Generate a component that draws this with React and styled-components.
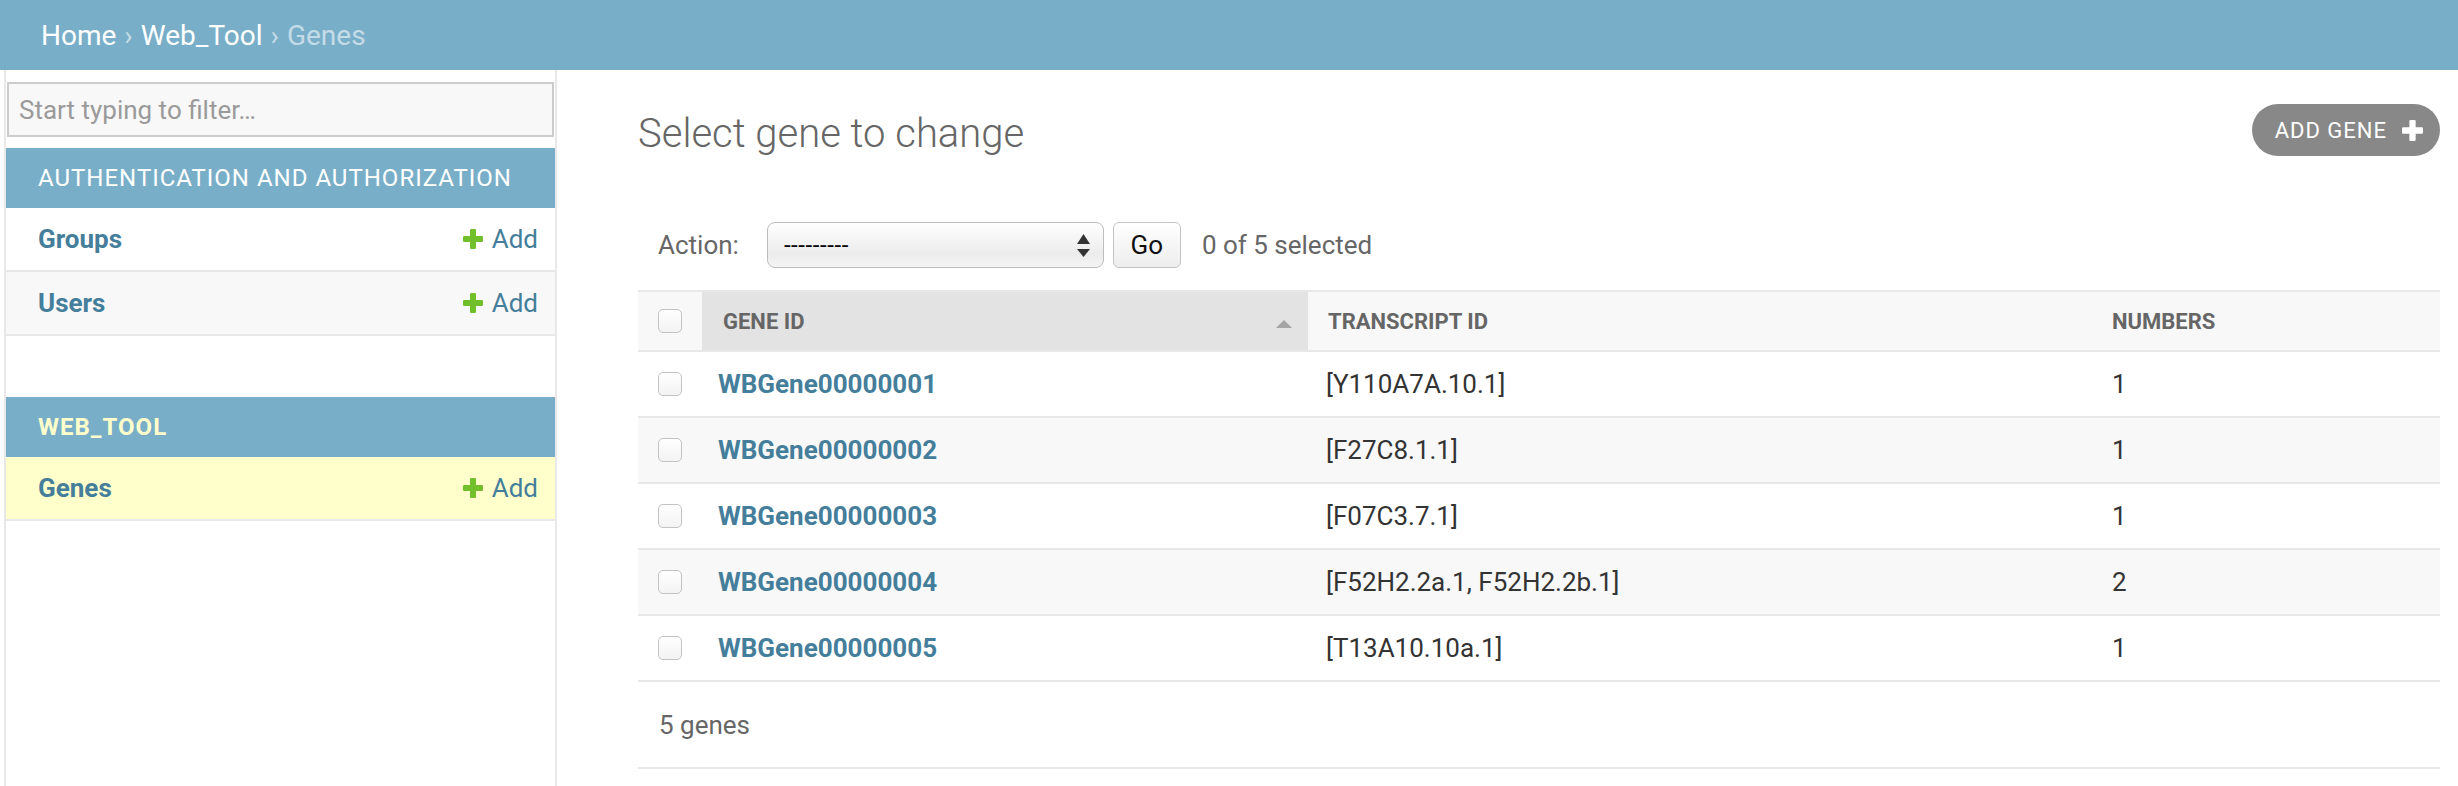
import React from 'react';
import styled, { createGlobalStyle } from 'styled-components';

const GlobalStyle = createGlobalStyle`
  * { box-sizing: border-box; }
  body {
    margin: 0;
    background: #ffffff;
    font-family: Roboto, 'Liberation Sans', sans-serif;
    color: #333333;
  }
`;

const Breadcrumbs = styled.div`
  height: 70px;
  padding-left: 41px;
  display: flex;
  align-items: center;
  background: #79aec8;
  font-size: 28px;
  color: #c4dce8;
`;

const Crumb = styled.a`
  color: #ffffff;
  text-decoration: none;
`;

const Sep = styled.span`
  margin: 0 8px;
  color: #c4dce8;
`;

const Layout = styled.div`
  display: flex;
  min-height: calc(100vh - 70px);
`;

const Sidebar = styled.nav`
  flex: 0 0 553px;
  margin-left: 4px;
  padding-top: 12px;
  border-left: 2px solid #e8e8e8;
  border-right: 2px solid #e8e8e8;
`;

const FilterInput = styled.input`
  display: block;
  width: calc(100% - 2px);
  height: 55px;
  margin: 0 0 11px 1px;
  padding: 0 10px;
  border: 2px solid #cccccc;
  background: #f8f8f8;
  font-family: inherit;
  font-size: 26px;
  color: #333;
  outline: none;
  &::placeholder {
    color: #9a9a9a;
  }
`;

const Module = styled.div`
  margin-bottom: 61px;
`;

const Caption = styled.div`
  height: 60px;
  display: flex;
  align-items: center;
  padding-left: 32px;
  background: #79aec8;
  font-size: 24px;
  letter-spacing: 1px;
  text-transform: uppercase;
  color: ${({ $current }) => ($current ? '#ffffcc' : '#ffffff')};
  font-weight: ${({ $current }) => ($current ? 700 : 400)};
`;

const ModelRow = styled.div`
  height: 64px;
  display: flex;
  align-items: center;
  justify-content: space-between;
  padding: 0 17px 0 32px;
  border-bottom: 2px solid #e8e8e8;
  background: ${({ $current, $alt }) => ($current ? '#ffffcc' : $alt ? '#f8f8f8' : '#ffffff')};
`;

const ModelName = styled.a`
  font-size: 26px;
  font-weight: 700;
  color: #447e9b;
  text-decoration: none;
`;

const AddLink = styled.a`
  display: flex;
  align-items: center;
  gap: 9px;
  font-size: 26px;
  color: #447e9b;
  text-decoration: none;
`;

const Plus = ({ size, color }) => (
  <svg width={size} height={size} viewBox="0 0 20 20">
    <rect x="0" y="7" width="20" height="6" rx="1.2" fill={color} />
    <rect x="7" y="0" width="6" height="20" rx="1.2" fill={color} />
  </svg>
);

const Content = styled.main`
  flex: 1;
  padding: 34px 18px 0 81px;
`;

const TitleRow = styled.div`
  display: flex;
  justify-content: space-between;
  align-items: flex-start;
`;

const Title = styled.h1`
  margin: 6px 0 0;
  font-size: 40px;
  line-height: 48px;
  font-weight: 300;
  color: #666666;
`;

const AddButton = styled.a`
  height: 52px;
  display: flex;
  align-items: center;
  gap: 15px;
  padding: 0 17px 0 23px;
  border-radius: 26px;
  background: #888888;
  color: #ffffff;
  font-size: 22px;
  letter-spacing: 1px;
  text-transform: uppercase;
  text-decoration: none;
`;

const Actions = styled.div`
  display: flex;
  align-items: center;
  margin-top: 44px;
  padding: 20px 20px 22px;
  font-size: 26px;
`;

const ActionLabel = styled.label`
  color: #666666;
  margin-right: 28px;
`;

const Select = styled.div`
  width: 337px;
  height: 46px;
  display: flex;
  align-items: center;
  justify-content: space-between;
  padding: 0 13px 0 16px;
  border: 1px solid #bdbdbd;
  border-radius: 8px;
  background: linear-gradient(#ffffff, #ececec 70%, #f4f4f4);
  box-shadow: inset 0 1px 0 #ffffff;
  color: #000;
  font-size: 24px;
  letter-spacing: 0.6px;
`;

const GoButton = styled.button`
  width: 68px;
  height: 46px;
  margin-left: 9px;
  border: 1px solid #c4c4c4;
  border-radius: 6px;
  background: linear-gradient(#ffffff, #ededed);
  font-family: inherit;
  font-size: 26px;
  color: #111;
`;

const Counter = styled.span`
  margin-left: 21px;
  color: #666666;
`;

const Table = styled.table`
  width: 100%;
  table-layout: fixed;
  border-collapse: separate;
  border-spacing: 0;
`;

const HeadCell = styled.th`
  height: 62px;
  padding: 0 ${({ $right }) => $right || 0}px 0 ${({ $pad }) => $pad}px;
  border-top: 2px solid #e8e8e8;
  border-bottom: 2px solid #e8e8e8;
  background: ${({ $sorted }) => ($sorted ? '#e3e3e3' : '#f8f8f8')};
  text-align: left;
  vertical-align: middle;
  font-size: 22px;
  font-weight: 700;
  text-transform: uppercase;
  color: #666666;
`;

const HeadInner = styled.div`
  display: flex;
  align-items: center;
  justify-content: space-between;
`;

const SortArrow = styled.span`
  width: 0;
  height: 0;
  margin-top: 6px;
  border-left: 8px solid transparent;
  border-right: 8px solid transparent;
  border-bottom: 8px solid #a5a5a5;
`;

const Row = styled.tr`
  background: ${({ $alt }) => ($alt ? '#f8f8f8' : '#ffffff')};
`;

const Cell = styled.td`
  height: 66px;
  padding: 0 0 0 ${({ $pad }) => $pad}px;
  border-bottom: 2px solid #e8e8e8;
  vertical-align: middle;
  font-size: 26px;
  color: #333333;
  white-space: nowrap;
`;

const Checkbox = styled.span`
  display: block;
  width: 24px;
  height: 24px;
  border: 1px solid #c3c3c3;
  border-radius: 5px;
  background: linear-gradient(#ffffff, #f3f3f3);
`;

const GeneLink = styled.a`
  font-weight: 700;
  color: #447e9b;
  text-decoration: none;
`;

const Paginator = styled.div`
  height: 87px;
  display: flex;
  align-items: center;
  padding-left: 21px;
  border-bottom: 2px solid #e8e8e8;
  font-size: 26px;
  color: #666666;
`;

const genes = [
  { id: 'WBGene00000001', transcripts: '[Y110A7A.10.1]', numbers: 1 },
  { id: 'WBGene00000002', transcripts: '[F27C8.1.1]', numbers: 1 },
  { id: 'WBGene00000003', transcripts: '[F07C3.7.1]', numbers: 1 },
  { id: 'WBGene00000004', transcripts: '[F52H2.2a.1, F52H2.2b.1]', numbers: 2 },
  { id: 'WBGene00000005', transcripts: '[T13A10.10a.1]', numbers: 1 },
];

const SelectArrows = () => (
  <svg width="13" height="23" viewBox="0 0 13 23">
    <polygon points="0,10 6.5,0 13,10" fill="#333" />
    <polygon points="0,15 6.5,23 13,15" fill="#333" />
  </svg>
);

export default function App() {
  return (
    <>
      <GlobalStyle />
      <Breadcrumbs>
        <Crumb href="#">Home</Crumb>
        <Sep>›</Sep>
        <Crumb href="#">Web_Tool</Crumb>
        <Sep>›</Sep>
        <span>Genes</span>
      </Breadcrumbs>
      <Layout>
        <Sidebar>
          <FilterInput placeholder="Start typing to filter…" />
          <Module>
            <Caption>Authentication and Authorization</Caption>
            <ModelRow>
              <ModelName href="#">Groups</ModelName>
              <AddLink href="#"><Plus size={20} color="#70bf2b" />Add</AddLink>
            </ModelRow>
            <ModelRow $alt>
              <ModelName href="#">Users</ModelName>
              <AddLink href="#"><Plus size={20} color="#70bf2b" />Add</AddLink>
            </ModelRow>
          </Module>
          <Module>
            <Caption $current>Web_Tool</Caption>
            <ModelRow $current>
              <ModelName href="#">Genes</ModelName>
              <AddLink href="#"><Plus size={20} color="#70bf2b" />Add</AddLink>
            </ModelRow>
          </Module>
        </Sidebar>
        <Content>
          <TitleRow>
            <Title>Select gene to change</Title>
            <AddButton href="#">Add gene<Plus size={21} color="#ffffff" /></AddButton>
          </TitleRow>
          <Actions>
            <ActionLabel>Action:</ActionLabel>
            <Select>
              <span>---------</span>
              <SelectArrows />
            </Select>
            <GoButton>Go</GoButton>
            <Counter>0 of 5 selected</Counter>
          </Actions>
          <Table>
            <thead>
              <tr>
                <HeadCell $pad={20} style={{ width: 64 }}><Checkbox /></HeadCell>
                <HeadCell $pad={21} $right={16} $sorted style={{ width: 606 }}>
                  <HeadInner>
                    <span>Gene ID</span>
                    <SortArrow />
                  </HeadInner>
                </HeadCell>
                <HeadCell $pad={20} style={{ width: 784 }}>Transcript ID</HeadCell>
                <HeadCell $pad={20}>Numbers</HeadCell>
              </tr>
            </thead>
            <tbody>
              {genes.map((g, i) => (
                <Row key={g.id} $alt={i % 2 === 1}>
                  <Cell $pad={20}><Checkbox /></Cell>
                  <Cell $pad={16}><GeneLink href="#">{g.id}</GeneLink></Cell>
                  <Cell $pad={18}>{g.transcripts}</Cell>
                  <Cell $pad={20}>{g.numbers}</Cell>
                </Row>
              ))}
            </tbody>
          </Table>
          <Paginator>5 genes</Paginator>
        </Content>
      </Layout>
    </>
  );
}
